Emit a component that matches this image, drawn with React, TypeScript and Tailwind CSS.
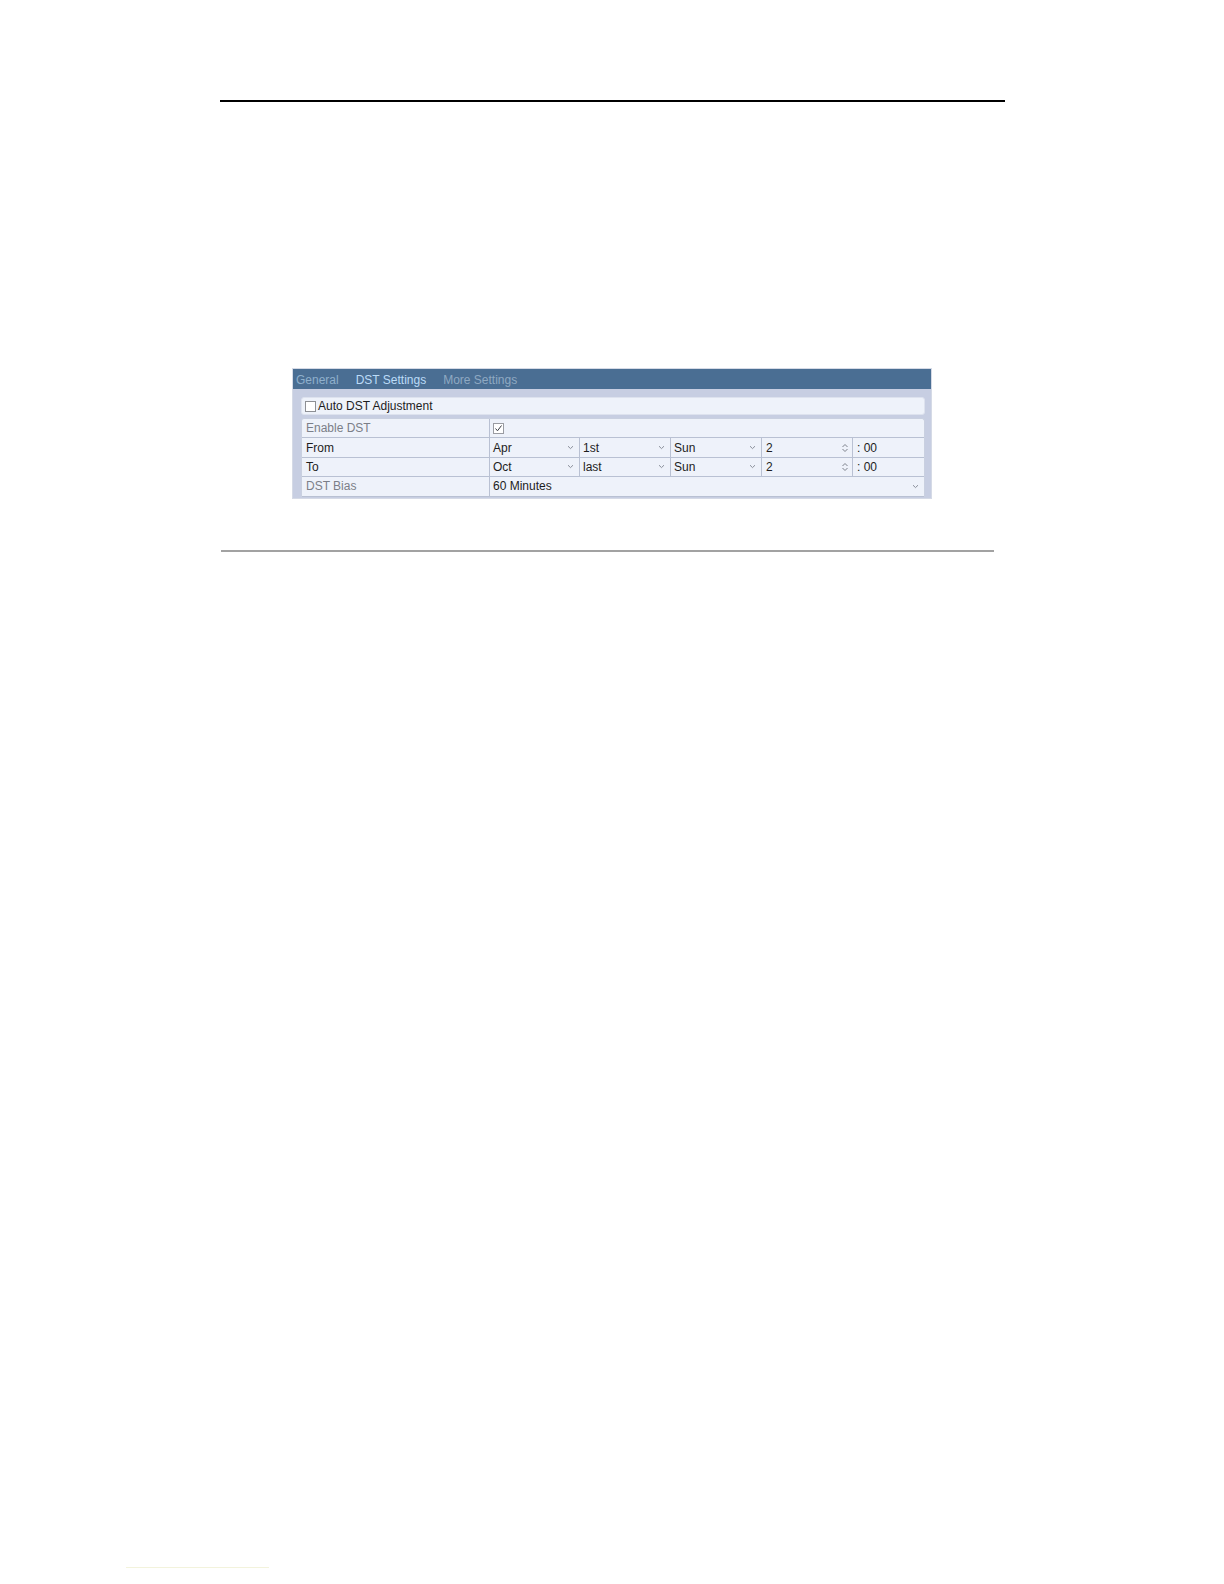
import React from "react";

const font = { fontFamily: '"Liberation Sans", Arial, sans-serif' };

function Chevron() {
  return (
    <svg width="7" height="5" viewBox="0 0 7 5" className="shrink-0">
      <path d="M1 1.2 L3.5 3.6 L6 1.2" fill="none" stroke="#8a8f9a" strokeWidth="1" />
    </svg>
  );
}

function Spinner() {
  return (
    <svg width="8" height="10" viewBox="0 0 8 10" className="shrink-0">
      <path d="M1.5 4 L4 1.5 L6.5 4" fill="none" stroke="#7d828c" strokeWidth="1" />
      <path d="M1.5 6 L4 8.5 L6.5 6" fill="none" stroke="#7d828c" strokeWidth="1" />
    </svg>
  );
}

function SelectCell({ value, last }: { value: string; last?: boolean }) {
  return (
    <div
      className={`flex items-center justify-between pl-[3px] pr-[5px] border-b border-[#b9c1d3] ${
        last ? "" : "border-r"
      }`}
    >
      <span>{value}</span>
      <Chevron />
    </div>
  );
}

function TimeRow({ label, month, week, day }: { label: string; month: string; week: string; day: string }) {
  return (
    <>
      <div className="flex items-center pl-[4px] border-r border-b border-[#b9c1d3] text-[#1d1d1d]">{label}</div>
      <SelectCell value={month} />
      <SelectCell value={week} />
      <SelectCell value={day} />
      <div className="flex items-center justify-between pl-[4px] pr-[3px] border-r border-b border-[#b9c1d3]">
        <span>2</span>
        <Spinner />
      </div>
      <div className="flex items-center pl-[4px] border-b border-[#b9c1d3]">: 00</div>
    </>
  );
}

export default function App() {
  return (
    <div className="w-[1224px] h-[1584px] bg-white flex flex-col" style={font}>
      <div className="ml-[220px] mt-[100px] w-[785px] h-[2px] bg-black" />

      {/* DST settings panel */}
      <div className="ml-[292px] mt-[266px] w-[640px] border border-[#d5dae6] bg-[#c7cee2] text-[12px] leading-none text-[#1d1d1d]">
        <div className="h-[20px] bg-[#4a6e93] flex items-center gap-[17px] pl-[3px] pt-[2px]">
          <span className="text-[#8fb0cc]">General</span>
          <span className="text-[#bcdcf8]">DST Settings</span>
          <span className="text-[#8fa9c2]">More Settings</span>
        </div>
        <div className="pl-[8px] pr-[6px] pt-[8px] pb-[1px] flex flex-col gap-[3px]">
          <div className="h-[18px] rounded-[3px] bg-[#eef2fa] border border-[#dde2ee] flex items-center pl-[3px]">
            <span className="w-[11px] h-[11px] border border-[#8d8f94] bg-white mr-[2px]" />
            <span>Auto DST Adjustment</span>
          </div>
          <div className="rounded-t-[3px] bg-[#eef2fa] border border-b-0 border-[#c9d0e0] grid grid-cols-[188px_90px_91px_91px_91px_1fr] auto-rows-[19.4px]">
            <div className="flex items-center pl-[4px] border-r border-b border-[#b9c1d3] text-[#7b7f88]">Enable DST</div>
            <div className="col-span-5 flex items-center pl-[3px] border-b border-[#b9c1d3]">
              <span className="w-[11px] h-[11px] border border-[#9a9ca2] bg-white flex items-center justify-center">
                <svg width="9" height="9" viewBox="0 0 9 9">
                  <path d="M1.5 4.5 L3.5 6.8 L7.5 1.5" fill="none" stroke="#3a3d44" strokeWidth="1" />
                </svg>
              </span>
            </div>
            <TimeRow label="From" month="Apr" week="1st" day="Sun" />
            <TimeRow label="To" month="Oct" week="last" day="Sun" />
            <div className="flex items-center pl-[4px] border-r border-b border-[#b9c1d3] text-[#7b7f88]">DST Bias</div>
            <div className="col-span-5 grid">
              <SelectCell value="60 Minutes" last />
            </div>
          </div>
        </div>
      </div>

      <div className="ml-[221px] mt-[51px] w-[773px] h-[2px] bg-[#a2a2a2]" />

      <div className="mt-auto mb-[16px] ml-[126px] w-[143px] h-px bg-[#f3f3dc]" />
    </div>
  );
}
